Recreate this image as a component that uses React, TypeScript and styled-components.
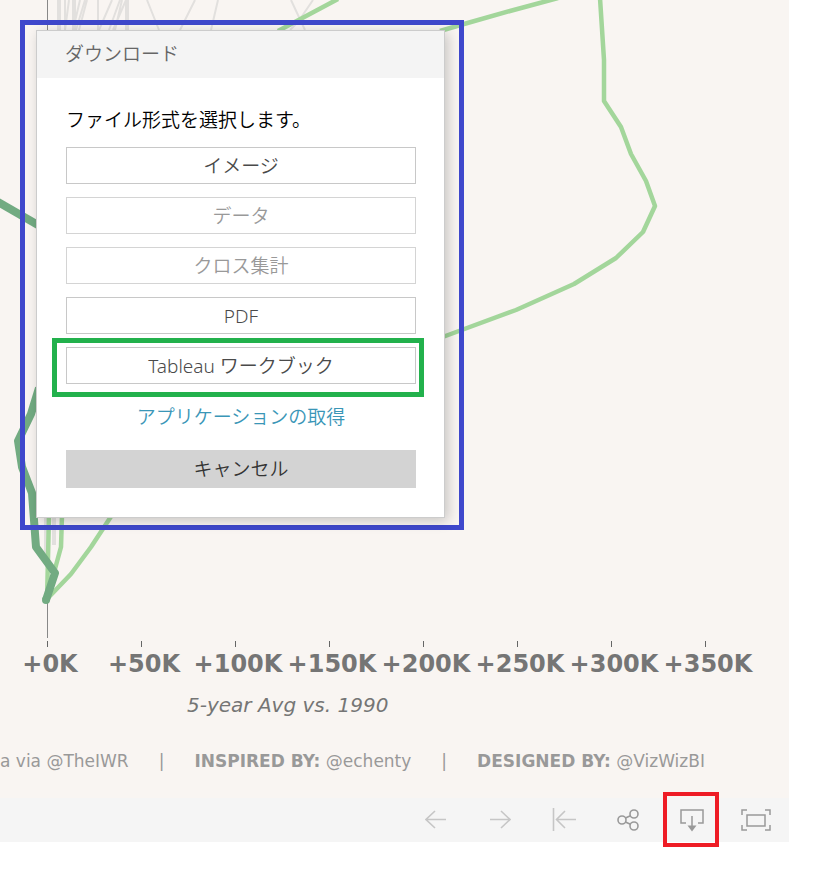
import React from "react";
import styled, { createGlobalStyle, css } from "styled-components";

const GlobalStyle = createGlobalStyle`
  *, *::before, *::after { box-sizing: border-box; }
  body { margin: 0; background: #fff; font-family: "DejaVu Sans", sans-serif; }
`;

const Page = styled.div`
  padding: 0 25px 24px 0;
`;

const Dashboard = styled.main`
  position: relative;
  background: #f9f5f2;
`;

const Chart = styled.svg`
  display: block;
  width: 100%;
  height: 648px;
`;

const AxisLabels = styled.div`
  display: grid;
  grid-template-columns: repeat(8, minmax(0, 1fr));
  padding: 0 34px 0 3px;
`;

const AxisLabel = styled.span`
  display: flex;
  justify-content: center;
  color: #757575;
  font-size: 24px;
  line-height: 32px;
  font-weight: 700;
  white-space: nowrap;
`;

const AxisTitle = styled.p`
  margin: 0;
  padding: 11px 0 0 187px;
  color: #757575;
  font-size: 20px;
  line-height: 28px;
  font-style: italic;
`;

const Credits = styled.footer`
  display: flex;
  gap: 30px;
  padding: 30px 0 25px;
  color: #999;
  font-size: 17px;
  line-height: 24px;
  white-space: nowrap;
`;

const Toolbar = styled.nav`
  display: flex;
  justify-content: flex-end;
  height: 44px;
  padding-right: 1px;
  background: #f5f5f5;
`;

const highlight = css`
  &::after {
    content: "";
    position: absolute;
    inset: -6px 5px -5px 3px;
    border: 4px solid #ee1c25;
  }
`;

const ToolButton = styled.button<{ $muted?: boolean; $marked?: boolean }>`
  position: relative;
  display: flex;
  align-items: center;
  justify-content: center;
  width: 64px;
  padding: 0;
  border: 0;
  background: none;
  color: ${(p) => (p.$muted ? "#c6c6c6" : "#999")};
  ${(p) => p.$marked && highlight}
`;

const Frame = styled.div`
  position: absolute;
  top: 20px;
  left: 20px;
  width: 444px;
  padding: 5px 14px 7px 11px;
  border: 5px solid #3f48cc;
`;

const Dialog = styled.section`
  border: 1px solid #ccc;
  background: #fff;
  box-shadow: 3px 3px 12px rgba(0, 0, 0, 0.2);
  color: #4a4a4a;
  font-family: "Noto Sans", "Noto Sans CJK JP", sans-serif;
  font-size: 19px;
  line-height: 28px;
  font-weight: 350;
`;

const DialogTitle = styled.h2`
  margin: 0;
  padding: 9px 28px 10px;
  background: #f4f4f4;
  color: #666;
  font-size: inherit;
  font-weight: inherit;
`;

const DialogBody = styled.div`
  display: flex;
  flex-direction: column;
  gap: 13px;
  padding: 28px 28px 29px 29px;
`;

const Prompt = styled.p`
  margin: 0;
  color: #000;
`;

const Option = styled.button<{ $marked?: boolean }>`
  position: relative;
  height: 37px;
  padding: 0;
  border: 1px solid #c8c8c8;
  background: #fff;
  color: inherit;
  font: inherit;
  &:disabled { color: #999; border-color: #d4d4d4; }
  ${(p) =>
    p.$marked &&
    css`
      &::after {
        content: "";
        position: absolute;
        inset: -10px -9px -14px -15px;
        border: 5px solid #22b14c;
      }
    `}
`;

const AppLink = styled.a`
  align-self: center;
  padding: 6px 0;
  color: #3a96b7;
  text-decoration: none;
`;

const Cancel = styled.button`
  height: 38px;
  padding: 0;
  border: 0;
  background: #d3d3d3;
  color: #333;
  font: inherit;
`;

const ticks = ["+0K", "+50K", "+100K", "+150K", "+200K", "+250K", "+300K", "+350K"];

const options = [
  { label: "イメージ" },
  { label: "データ", disabled: true },
  { label: "クロス集計", disabled: true },
  { label: "PDF" },
  { label: "Tableau ワークブック", marked: true },
];

function LineChart() {
  return (
    <Chart aria-label="5-year Avg vs. 1990" role="img" fill="none" strokeLinejoin="round">
      <path d="M47.5 0V638" stroke="#888" strokeWidth="1" />
      <g stroke="#e2e0de" strokeWidth="2">
        <path d="M65 0V30M69 0L65 30M75 0V30M80 0L73 30M85 0L76 30M87 0L79 30M98 0V30M112 0L99 30M120 0L109 30M126 0L113 30M122 0L115 30" />
        <path d="M147 0L159 30M195 0L180 30M218 0L211 30M291 0L305 30M313 0L298 22L290 30" />
        <path d="M59 0V30M74 0V30M127 0V30" strokeWidth="4" />
        <path d="M46 515V560M54 515V545" strokeWidth="4" />
      </g>
      <g stroke="#a3d69b" strokeWidth="4.500">
        <path d="M278 31L338 -1M440 31L464 24L510 11L558 -2" />
        <path d="M600 -2L604 60V101L621 127L631 154L646 181L655 206L643 232L616 258L574 284L516 310L440 338" />
        <path d="M49 515L47 600M62 515L61 547L47 598M112 515L91 547L71 574L47 599" />
      </g>
      <g stroke="#72ab82" strokeWidth="8">
        <path d="M-2 202L38 225" />
        <path d="M39 388L31 414L18 441L22 467L32 493L36 547L55 573L46 600" />
        <circle cx="46" cy="600" r="4" fill="#72ab82" stroke="none" />
      </g>
      <path
        d={ticks.map((_, i) => `M${47.5 + i * 94} 641V647`).join("")}
        stroke="#666"
        strokeWidth="1"
      />
    </Chart>
  );
}

function BackIcon() {
  return (
    <svg width="22" height="24" viewBox="0 0 22 24" fill="none" stroke="currentColor" strokeWidth="1.6">
      <path d="M21 11.5H1M10 3L1 11.5L10 20" />
    </svg>
  );
}

function ForwardIcon() {
  return (
    <svg width="22" height="24" viewBox="0 0 22 24" fill="none" stroke="currentColor" strokeWidth="1.6">
      <path d="M1 11.5H21M12 3L21 11.5L12 20" />
    </svg>
  );
}

function ResetIcon() {
  return (
    <svg width="24" height="24" viewBox="0 0 24 24" fill="none" stroke="currentColor" strokeWidth="1.6">
      <path d="M1.5 0V23M24 11.5H4.500M13 3L4.500 11.5L13 20" />
    </svg>
  );
}

function ShareIcon() {
  return (
    <svg width="22" height="22" viewBox="0 0 22 22" fill="none" stroke="currentColor" strokeWidth="1.6">
      <circle cx="5" cy="11" r="4" />
      <circle cx="17" cy="5" r="4" />
      <circle cx="17" cy="17" r="4" />
      <path d="M8.500 9L13.400 6.800M8.500 13L13.400 15.200" />
    </svg>
  );
}

function DownloadIcon() {
  return (
    <svg width="24" height="24" viewBox="0 0 24 24" fill="none" stroke="currentColor" strokeWidth="1.5">
      <path d="M6 15H1V2H23V15H18M12 8V20" />
      <path d="M7.500 17.500H16.500L12 23.500Z" fill="currentColor" stroke="none" />
    </svg>
  );
}

function FullScreenIcon() {
  return (
    <svg width="30" height="24" viewBox="0 0 30 24" fill="none" stroke="currentColor" strokeWidth="1.5">
      <path d="M6 2H1V7M24 2H29V7M1 17V22H6M29 17V22H24" />
      <rect x="6" y="7" width="18" height="11" />
    </svg>
  );
}

export default function App() {
  return (
    <Page>
      <GlobalStyle />
      <Dashboard>
        <LineChart />
        <AxisLabels>
          {ticks.map((t) => (
            <AxisLabel key={t}>{t}</AxisLabel>
          ))}
        </AxisLabels>
        <AxisTitle>5-year Avg vs. 1990</AxisTitle>
        <Credits>
          <span>a via @TheIWR</span>
          <span>|</span>
          <span><b>INSPIRED BY:</b> @echenty</span>
          <span>|</span>
          <span><b>DESIGNED BY:</b> @VizWizBI</span>
        </Credits>
        <Frame>
          <Dialog role="dialog" aria-labelledby="download-title">
            <DialogTitle id="download-title">ダウンロード</DialogTitle>
            <DialogBody>
              <Prompt>ファイル形式を選択します。</Prompt>
              {options.map((o) => (
                <Option key={o.label} disabled={o.disabled} $marked={o.marked}>
                  {o.label}
                </Option>
              ))}
              <AppLink href="#app">アプリケーションの取得</AppLink>
              <Cancel>キャンセル</Cancel>
            </DialogBody>
          </Dialog>
        </Frame>
      </Dashboard>
      <Toolbar>
        <ToolButton $muted aria-label="元に戻す"><BackIcon /></ToolButton>
        <ToolButton $muted aria-label="やり直し"><ForwardIcon /></ToolButton>
        <ToolButton $muted aria-label="リセット"><ResetIcon /></ToolButton>
        <ToolButton aria-label="共有"><ShareIcon /></ToolButton>
        <ToolButton $marked aria-label="ダウンロード"><DownloadIcon /></ToolButton>
        <ToolButton aria-label="全画面表示"><FullScreenIcon /></ToolButton>
      </Toolbar>
    </Page>
  );
}
